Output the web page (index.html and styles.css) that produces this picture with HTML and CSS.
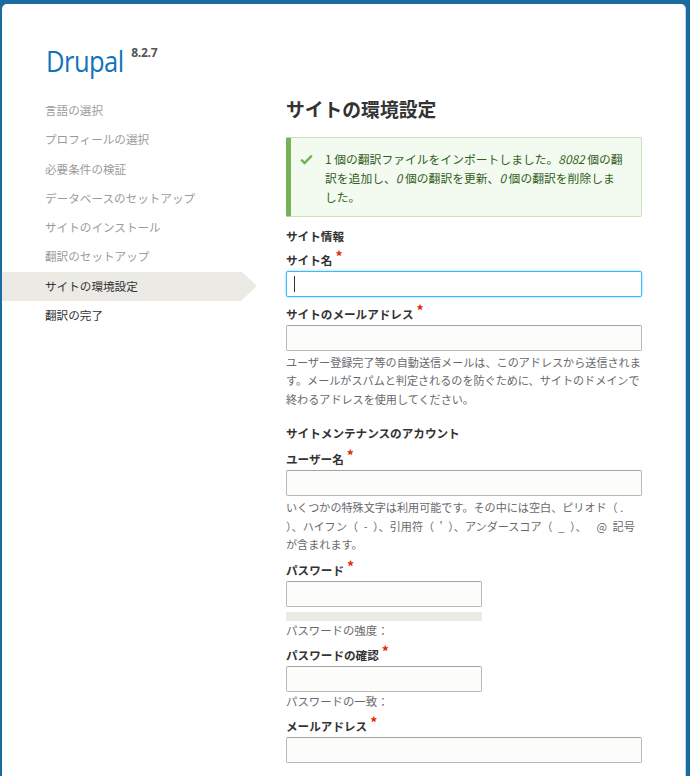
FILE: index.html
```html
<!DOCTYPE html>
<html lang="ja">
  <head>
    <meta charset="UTF-8" />
    <meta name="viewport" content="width=device-width, initial-scale=1.0" />
    <title>サイトの環境設定 | Drupal</title>
    <link rel="stylesheet" href="styles.css">
  </head>
  <body>
    <div class="page">
      <header class="site-header">
        <span class="site-name">Drupal</span><span class="site-version">8.2.7</span>
      </header>

      <div class="layout">
        <ol class="task-list">
          <li class="done">言語の選択</li>
          <li class="done">プロフィールの選択</li>
          <li class="done">必要条件の検証</li>
          <li class="done">データベースのセットアップ</li>
          <li class="done">サイトのインストール</li>
          <li class="done">翻訳のセットアップ</li>
          <li class="active">サイトの環境設定</li>
          <li>翻訳の完了</li>
        </ol>

        <main class="content">
          <h1 class="page-title">サイトの環境設定</h1>

          <div class="messages status">
            <svg class="check" width="13" height="11" viewBox="0 0 13 11">
              <path d="M1.2 5.6 L4.6 9 L11.8 1.6" fill="none" stroke="#73b355" stroke-width="2.4" />
            </svg>
            <p>1 個の翻訳ファイルをインポートしました。<em>8082</em> 個の翻訳を追加し、<em>0</em> 個の翻訳を更新、<em>0</em> 個の翻訳を削除しました。</p>
          </div>

          <form class="install-form">
            <h2 class="fieldset-legend">サイト情報</h2>

            <div class="form-item">
              <label>サイト名<span class="req">*</span></label>
              <div class="input-wrap">
                <input type="text" class="form-text is-focus" />
                <span class="caret"></span>
              </div>
            </div>

            <div class="form-item">
              <label>サイトのメールアドレス<span class="req">*</span></label>
              <input type="text" class="form-text" />
              <div class="description">ユーザー登録完了等の自動送信メールは、このアドレスから送信されます。メールがスパムと判定されるのを防ぐために、サイトのドメインで終わるアドレスを使用してください。</div>
            </div>

            <h2 class="fieldset-legend second">サイトメンテナンスのアカウント</h2>

            <div class="form-item">
              <label>ユーザー名<span class="req">*</span></label>
              <input type="text" class="form-text" />
              <div class="description">いくつかの特殊文字は利用可能です。その中には空白、ピリオド（ . ）、ハイフン（&ensp;-&ensp;）、引用符（&ensp;'&ensp;）、アンダースコア（&ensp;_&ensp;）、&ensp;&thinsp;&thinsp;@&ensp;記号が含まれます。</div>
            </div>

            <div class="form-item password">
              <label>パスワード<span class="req">*</span></label>
              <input type="password" class="form-text short" />
              <div class="strength-bar"></div>
              <div class="pw-note">パスワードの強度：</div>
            </div>

            <div class="form-item password">
              <label>パスワードの確認<span class="req">*</span></label>
              <input type="password" class="form-text short" />
              <div class="pw-note">パスワードの一致：</div>
            </div>

            <div class="form-item">
              <label>メールアドレス<span class="req">*</span></label>
              <input type="text" class="form-text" />
            </div>
          </form>
        </main>
      </div>
    </div>
  </body>
</html>
```

FILE: styles.css
```css
html, body {
  margin: 0;
  padding: 0;
}

body {
  background: #1b6aa0;
  font-family: "Noto Sans CJK JP", "Liberation Sans", sans-serif;
  font-size: 11.6px;
  color: #333;
  height: 776px;
  overflow: hidden;
}

.page {
  background: #fff;
  margin: 4px 4px 0 2px;
  border-radius: 5px 5px 0 0;
  border-right: 1px solid #c6d6e2;
  min-height: 800px;
}

.site-header {
  padding: 37px 0 0 44px;
  height: 53px;
}

.site-name {
  display: inline-block;
  font-family: "Open Sans", "Liberation Sans", sans-serif;
  font-size: 29px;
  font-weight: 500;
  color: #0f74bb;
  letter-spacing: -0.6px;
  transform: scaleX(0.88);
  transform-origin: left center;
}

.site-version {
  display: inline-block;
  vertical-align: top;
  margin: 3px 0 0 -3px;
  font-family: "Open Sans", "Liberation Sans", sans-serif;
  font-size: 12px;
  font-weight: bold;
  letter-spacing: -0.3px;
  color: #555;
}

.layout {
  display: flex;
}

/* sidebar */
.task-list {
  list-style: none;
  margin: 0;
  padding: 2px 0 0;
  width: 240px;
  flex: none;
}

.task-list li {
  padding: 5px 0 5px 43px;
  line-height: 19.3px;
  color: #333;
}

.task-list li.done {
  color: #9b9b9b;
}

.task-list li.active {
  position: relative;
  background: #ebeae5;
}

.task-list li.active::after {
  content: "";
  position: absolute;
  right: -15px;
  top: 0;
  border-top: 14.6px solid transparent;
  border-bottom: 14.6px solid transparent;
  border-left: 15px solid #ebeae5;
}

/* main */
.content {
  margin-left: 44px;
  width: 356px;
}

.page-title {
  margin: 3px 0 16px;
  font-size: 18.8px;
  line-height: 24px;
  font-weight: bold;
  color: #333;
}

.messages {
  display: flex;
  align-items: flex-start;
  background: #f3faef;
  border: 1px solid #c9e1bd;
  border-left: 5px solid #77b259;
  border-radius: 2px;
  padding: 11px 16px 10px 8px;
  color: #325e1c;
}

.messages .check {
  flex: none;
  margin: 5px 12px 0 1px;
}

.messages p {
  margin: 0;
  line-height: 19px;
  font-size: 11.8px;
}

.fieldset-legend {
  margin: 10px 0 6px;
  font-size: 11.6px;
  line-height: 18px;
  font-weight: bold;
  color: #333;
}

.fieldset-legend.second {
  margin: 16px 0 8px;
}

.form-item {
  margin-bottom: 8px;
}

.form-item.password {
  margin-bottom: 7px;
}

.form-item label {
  display: block;
  font-weight: bold;
  font-size: 11.6px;
  line-height: 18px;
  margin-bottom: 2px;
  color: #333;
}

.req {
  color: #e32700;
  font-size: 14px;
  line-height: 0;
  margin-left: 3px;
  position: relative;
  top: -3px;
}

.form-text {
  display: block;
  box-sizing: border-box;
  width: 356px;
  height: 26px;
  margin: 0;
  padding: 3px 6px;
  background: #fcfcfa;
  border: 1px solid #b8b8b8;
  border-top-color: #a3a3a3;
  border-radius: 2px;
  font: inherit;
}

.form-text.short {
  width: 196px;
}

.form-text.is-focus {
  background: #fff;
  border-color: #40b6ff;
  box-shadow: 0 0 3px rgba(64, 182, 255, 0.6);
  outline: none;
}

.input-wrap {
  position: relative;
}

.caret {
  position: absolute;
  left: 8px;
  top: 5px;
  width: 1px;
  height: 16px;
  background: #333;
}

.description {
  margin-top: 2px;
  font-size: 11.1px;
  line-height: 18.4px;
  color: #68696b;
}

.strength-bar {
  width: 196px;
  height: 9px;
  margin-top: 5px;
  background: #ebeae4;
}

.pw-note {
  font-size: 11.4px;
  line-height: 18px;
  color: #68696b;
}
```
